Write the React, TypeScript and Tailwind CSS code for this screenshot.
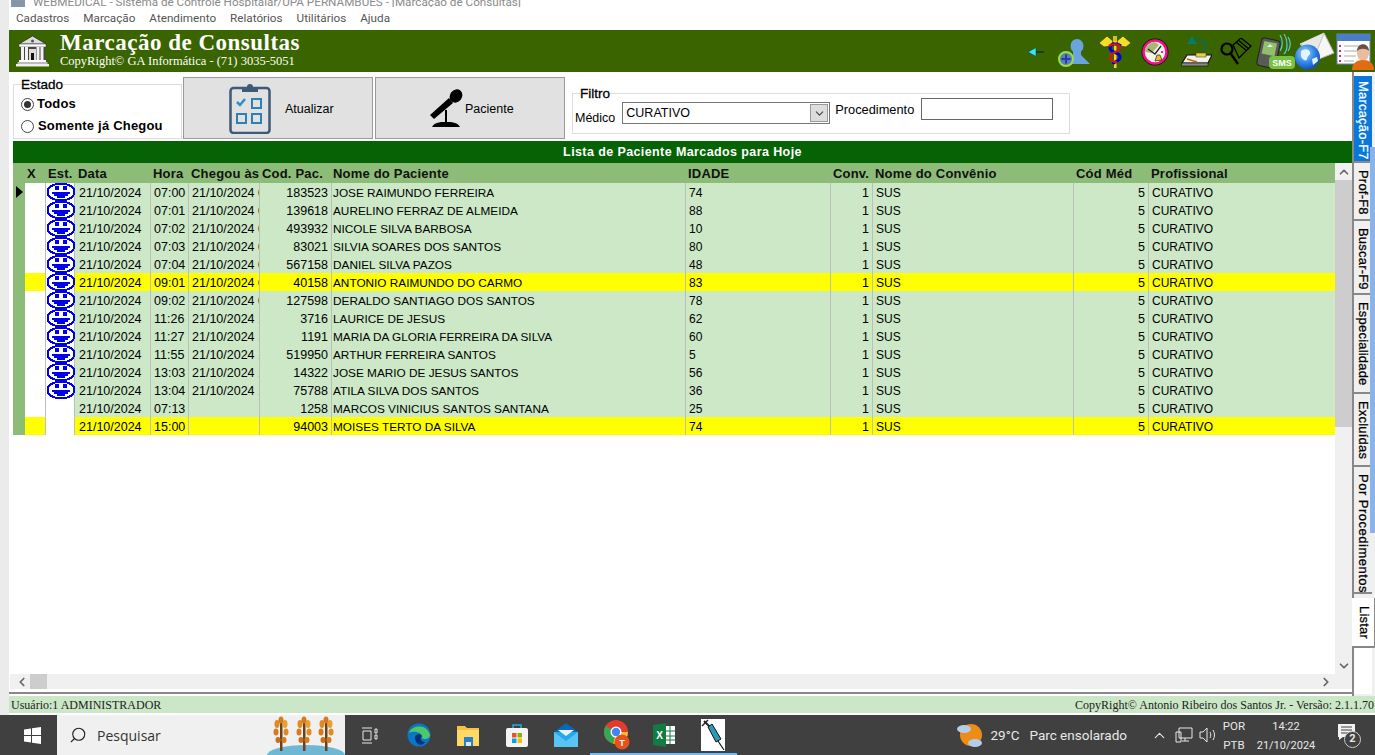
import { ChevronDown, ChevronLeft, ChevronRight, ChevronUp, Search } from "lucide-react";

const rows = [
  ["07:00", "21/10/2024 06:41", "183523", "JOSE RAIMUNDO FERREIRA", "74"],
  ["07:01", "21/10/2024 06:44", "139618", "AURELINO FERRAZ DE ALMEIDA", "88"],
  ["07:02", "21/10/2024 06:47", "493932", "NICOLE SILVA BARBOSA", "10"],
  ["07:03", "21/10/2024 06:52", "83021", "SILVIA SOARES DOS SANTOS", "80"],
  ["07:04", "21/10/2024 06:58", "567158", "DANIEL SILVA PAZOS", "48"],
  ["09:01", "21/10/2024 08:30", "40158", "ANTONIO RAIMUNDO DO CARMO", "83"],
  ["09:02", "21/10/2024 08:34", "127598", "DERALDO SANTIAGO DOS SANTOS", "78"],
  ["11:26", "21/10/2024 10:12", "3716", "LAURICE DE JESUS", "62"],
  ["11:27", "21/10/2024 10:15", "1191", "MARIA DA GLORIA FERREIRA DA SILVA", "60"],
  ["11:55", "21/10/2024 10:40", "519950", "ARTHUR FERREIRA SANTOS", "5"],
  ["13:03", "21/10/2024 12:20", "14322", "JOSE MARIO DE JESUS SANTOS", "56"],
  ["13:04", "21/10/2024 12:31", "75788", "ATILA SILVA DOS SANTOS", "36"],
  ["07:13", "", "1258", "MARCOS VINICIUS SANTOS SANTANA", "25"],
  ["15:00", "", "94003", "MOISES TERTO DA SILVA", "74"],
];

const cols = "grid grid-cols-[12px_20px_30px_76px_38px_71px_72px_354px_145px_42px_201px_75px_186px]";
const menu = ["Cadastros", "Marcação", "Atendimento", "Relatórios", "Utilitários", "Ajuda"];
const tabs = [
  ["Prof-F8", "h-[58px] tracking-[0.2px]"],
  ["Buscar-F9", "h-[74px] tracking-[0.2px]"],
  ["Especialidade", "h-[99px] tracking-[0.2px]"],
  ["Excluídas", "h-[73px] tracking-[0.2px]"],
  ["Por Procedimentos", "h-[127px] tracking-[0.5px]"],
];

function Smiley() {
  return (
    <svg width="30" height="20" viewBox="0 0 30 20" className="-mt-[1px] block" shapeRendering="crispEdges">
      <ellipse cx="15" cy="10" rx="13.500" ry="8.500" fill="#fff" stroke="#0000f0" strokeWidth="2" />
      <rect x="9" y="4" width="4" height="4" fill="#0000f0" />
      <rect x="17" y="4" width="4" height="4" fill="#0000f0" />
      <path d="M6 10h18v2h-2v2h-3v2h-8v-2H8v-2H6z" fill="#0000f0" />
    </svg>
  );
}

function Bank() {
  return (
    <svg width="33" height="32" viewBox="0 0 33 32">
      <path d="M16.500 1 30 9H3z" fill="#ddd" stroke="#222" strokeWidth="0.7" />
      <circle cx="16.500" cy="6" r="1.500" fill="#555" />
      <rect x="3" y="9" width="27" height="3" fill="#fff" stroke="#333" strokeWidth="0.5" />
      <rect x="4" y="12" width="25" height="13" fill="#444" />
      {[5, 9, 20.500, 24.500].map((x) => (
        <rect key={x} x={x} y="12" width="3" height="13" fill="#f2f2f2" />
      ))}
      <rect x="13" y="14" width="7" height="11" fill="#ddd" />
      <rect x="15" y="18" width="3" height="7" fill="#111" />
      <rect x="3" y="25" width="27" height="2" fill="#fff" />
      <rect x="1.500" y="27" width="30" height="2" fill="#bbb" />
      <rect x="0" y="29" width="33" height="2.500" fill="#eee" />
    </svg>
  );
}

function Clipboard() {
  return (
    <svg width="42" height="52" viewBox="0 0 42 52">
      <rect x="1.500" y="6" width="39" height="45" rx="3" fill="none" stroke="#3d5a78" strokeWidth="2.500" />
      <path d="M13 10V5h5a3 3 0 0 1 6 0h5v5z" fill="#3d5a78" />
      <path d="M8 20l3 3 5-6" fill="none" stroke="#2d8fc8" strokeWidth="2.500" />
      <rect x="23" y="17" width="9" height="9" fill="none" stroke="#2d7fb8" strokeWidth="2" />
      <rect x="8" y="32" width="9" height="9" fill="none" stroke="#2d7fb8" strokeWidth="2" />
      <rect x="23" y="32" width="9" height="9" fill="none" stroke="#2d7fb8" strokeWidth="2" />
    </svg>
  );
}

function Mic() {
  return (
    <svg width="34" height="40" viewBox="0 0 34 40">
      <path d="M1 27 20 10l4 5L5 31z" fill="#000" />
      <ellipse cx="27" cy="8" rx="6" ry="7" transform="rotate(38 27 8)" fill="#000" />
      <rect x="16" y="22" width="2" height="13" fill="#000" />
      <path d="M3 39c3-5 8-5 14-5s11 0 14 5z" fill="#000" />
    </svg>
  );
}

function HeaderIcons() {
  return (
    <div className="ml-auto flex h-full items-center">
      <svg width="17" height="10" viewBox="0 0 17 10" className="mr-[14px] mt-[2px]">
        <path d="M8 5h9" stroke="#10303a" strokeWidth="1.500" />
        <path d="M1 5l8-4.500v9z" fill="#30e8f8" stroke="#10303a" strokeWidth="0.500" />
      </svg>
      <svg width="33" height="28" viewBox="0 0 33 28" className="mr-[8px] mt-[3px]">
        <ellipse cx="19" cy="7" rx="6.500" ry="7" fill="#6aa4dc" />
        <path d="M15 12h8v4l9 9H12l3-5z" fill="#6aa4dc" />
        <circle cx="8" cy="20" r="7" fill="#4a86b8" stroke="#a0dc40" strokeWidth="2" />
        <path d="M8 15.500v9M3.500 20h9" stroke="#3a30a8" strokeWidth="2" />
      </svg>
      <svg width="32" height="33" viewBox="0 0 32 33" className="mr-[10px]">
        <path d="M14 6 8 1 0 8l5 4 7-1zM18 6l6-5 8 7-5 4-7-1z" fill="#f4e020" stroke="#333" strokeWidth="0.700" />
        <rect x="14" y="1" width="4" height="6" fill="#d8c010" />
        <rect x="15" y="6" width="2.500" height="27" fill="#f4d810" />
        <path d="M22 11c-4-3-11-3-11 2s10 4 10 9-6 4-7 7" fill="none" stroke="#0000d8" strokeWidth="3" />
        <path d="M10 11c4-3 11-2 11 2s-10 4-10 9 5 4 7 6" fill="none" stroke="#d81818" strokeWidth="2.200" />
      </svg>
      <svg width="28" height="28" viewBox="0 0 28 28" className="mr-[10px] mt-[2px]">
        <circle cx="14" cy="14" r="13.500" fill="#111" />
        <circle cx="14" cy="14" r="11.500" fill="#f4f4e8" stroke="#f01088" strokeWidth="2.500" />
        <path d="M4 14A10 10 0 0 1 14 4l4 3-7 8z" fill="#a8b878" />
        <path d="M7 11l7 5 6-8" stroke="#222" strokeWidth="1.300" fill="none" />
        <path d="M14 23l2-6h3l2 5z" fill="#e8c020" stroke="#222" strokeWidth="0.700" />
        <rect x="20" y="13" width="2" height="2" fill="#e020c0" />
      </svg>
      <svg width="33" height="33" viewBox="0 0 33 33" className="mr-[8px]">
        <path d="M8 20h25l-4 8H3z" fill="#f2f2e8" stroke="#111" strokeWidth="1.200" />
        <path d="M3 28h26v3H2z" fill="#888" stroke="#111" strokeWidth="0.600" />
        <path d="M8 24l10 3" stroke="#c06020" strokeWidth="1.500" />
        <rect x="17" y="18" width="10" height="4" fill="#e8d040" stroke="#333" strokeWidth="0.500" />
        <path d="M13 1l-5 8h10z" fill="#0a7a6a" />
        <path d="M15 3l12 5-3 9" fill="none" stroke="#0a6a5a" strokeWidth="1.600" />
      </svg>
      <svg width="32" height="28" viewBox="0 0 32 28" className="mr-[3px] mt-[2px]">
        <path d="M13 7 21 0l10 8-12 12zM16 4l11 9M18 2l11 9" fill="#3a6400" stroke="#000" strokeWidth="1.300" />
        <circle cx="7" cy="11" r="5.500" fill="#3a6400" stroke="#000" strokeWidth="2.200" />
        <path d="M11 16l7 10" stroke="#000" strokeWidth="2.500" />
      </svg>
      <svg width="40" height="36" viewBox="0 0 40 36" className="mt-[2px]">
        <path d="M25 1c3 4 3 12 0 16M29 0c4 6 4 16 0 20M33 3c3 4 3 10 0 14" fill="none" stroke="#58d0d0" strokeWidth="1.200" />
        <rect x="4" y="5" width="19" height="28" rx="3" transform="rotate(12 13 19)" fill="#5a5a5a" stroke="#222" />
        <rect x="8" y="8" width="13" height="13" transform="rotate(12 14 14)" fill="#90c068" />
        <path d="M12 13l3-3 3 3z" fill="#e8f0d8" />
        <rect x="14" y="22" width="26" height="13" rx="4" fill="#78c040" />
        <text x="27" y="32" textAnchor="middle" fill="#fff" fontSize="9" fontWeight="700" fontFamily="Liberation Sans, sans-serif">SMS</text>
      </svg>
      <svg width="40" height="38" viewBox="0 0 40 38" className="mr-[1px]">
        <defs>
          <radialGradient id="globe" cx="0.4" cy="0.35" r="0.7">
            <stop offset="0" stopColor="#a8d8f8" />
            <stop offset="0.55" stopColor="#3088e8" />
            <stop offset="1" stopColor="#1048b8" />
          </radialGradient>
        </defs>
        <path d="M5 12 29 1l10 20-20 8z" fill="#f6f6f6" stroke="#b8b8b8" />
        <path d="M5 12l17 7 7-18" fill="#e8e8e8" stroke="#c4c4c4" />
        <circle cx="12.500" cy="25" r="12.500" fill="url(#globe)" />
        <path d="M6 19c4-3 8-2 9 1s-3 4-3 7-5 1-6-3zM17 27l5-2 1 4-5 4z" fill="#e4f4fc" />
      </svg>
      <svg width="39" height="38" viewBox="0 0 39 38" className="mt-[1px]">
        <rect x="1" y="1" width="33" height="30" fill="#fff" stroke="#6688a8" />
        <rect x="1" y="1" width="33" height="7" fill="#4a7cc8" />
        <path d="M8 13h20M8 18h14M8 23h12M8 28h10" stroke="#aaa" />
        <rect x="3" y="12" width="2" height="2" fill="#e020a0" />
        <rect x="3" y="17" width="2" height="2" fill="#e020a0" />
        <rect x="3" y="22" width="2" height="2" fill="#e020a0" />
        <rect x="3" y="27" width="2" height="2" fill="#e020a0" />
        <ellipse cx="27" cy="20" rx="6" ry="8" fill="#e8bc9c" />
        <path d="M21 18c0-9 12-9 12 0-3-3-9-3-12 0z" fill="#6a5040" />
        <path d="M16 37c0-7 5-10 11-10s11 3 11 10z" fill="#e46c10" />
      </svg>
    </div>
  );
}

function Edge() {
  return (
    <svg width="24" height="24" viewBox="0 0 24 24">
      <circle cx="12" cy="12" r="11.500" fill="#0c75c4" />
      <path d="M2 10C4 2 20 0 23 12c0 4-6 5-8 3 2-5-8-8-13-5z" fill="#4cc864" />
      <path d="M8 15c0-4 5-5 7-2-3 2-1 6 3 6-4 6-10 1-10-4z" fill="#062f78" />
    </svg>
  );
}

function Folder() {
  return (
    <svg width="22" height="22" viewBox="0 0 22 22">
      <path d="M0 2h8l2 2h12v18H0z" fill="#f5c242" />
      <path d="M0 6h22v16H0z" fill="#ffd966" />
      <rect x="7" y="13" width="9" height="9" fill="#2a80c8" />
      <rect x="9" y="18" width="5" height="4" fill="#d8e8f4" />
    </svg>
  );
}

function Store() {
  return (
    <svg width="22" height="24" viewBox="0 0 22 24">
      <path d="M7 5V2h8v3" fill="none" stroke="#28a8e0" strokeWidth="1.500" />
      <rect x="0" y="5" width="22" height="19" rx="2" fill="#f4f4f4" />
      <rect x="6" y="10" width="4.500" height="4.500" fill="#f25022" />
      <rect x="11.500" y="10" width="4.500" height="4.500" fill="#7fba00" />
      <rect x="6" y="15.500" width="4.500" height="4.500" fill="#00a4ef" />
      <rect x="11.500" y="15.500" width="4.500" height="4.500" fill="#ffb900" />
    </svg>
  );
}

function Mail() {
  return (
    <svg width="24" height="24" viewBox="0 0 24 24">
      <path d="M12 0 24 9v15H0V9z" fill="#0a68b8" />
      <path d="M0 9h24v15H0z" fill="#28a8e8" />
      <path d="M0 9l12 9 12-9v15H0z" fill="#58c4f4" />
      <path d="M4 7h16l-8 6z" fill="#e8f4fc" />
    </svg>
  );
}

function Chrome() {
  return (
    <svg width="26" height="30" viewBox="0 0 26 30" className="ml-[4px]">
      <circle cx="12" cy="12" r="12" fill="#e33b2e" />
      <path d="M12 12 24 12A12 12 0 0 1 9 23.600z" fill="#fbc02d" />
      <path d="M12 12 9 23.600A12 12 0 0 1 1.600 6z" fill="#34a853" />
      <circle cx="12" cy="12" r="5.500" fill="#fff" />
      <circle cx="12" cy="12" r="4.200" fill="#4285f4" />
      <circle cx="18" cy="22" r="7.500" fill="#e8501c" />
      <text x="18" y="25.500" textAnchor="middle" fill="#fff" fontSize="9" fontWeight="700" fontFamily="Liberation Sans, sans-serif">T</text>
    </svg>
  );
}

function Excel() {
  return (
    <svg width="22" height="24" viewBox="0 0 22 24">
      <rect x="7" y="3" width="15" height="18" fill="#fff" />
      <path d="M12 3v18M17 3v18M7 8h15M7 13h15M7 17h15" stroke="#1d7a46" />
      <path d="M0 2 13 0v24L0 22z" fill="#107c41" />
      <text x="6.500" y="16" textAnchor="middle" fill="#fff" fontSize="10" fontWeight="700" fontFamily="Liberation Sans, sans-serif">X</text>
    </svg>
  );
}

function Syringe() {
  return (
    <svg width="24" height="32" viewBox="0 0 24 32">
      <rect width="24" height="32" fill="#fff" />
      <path d="M3 2 9 8" stroke="#222" strokeWidth="2" />
      <path d="M1 7l6-6" stroke="#222" strokeWidth="1.500" />
      <path d="M7 8l4-3 9 15-5 3z" fill="#2a9ab8" stroke="#111" />
      <path d="M17 22l6 9" stroke="#111" strokeWidth="1.200" />
    </svg>
  );
}

function Trees() {
  return (
    <svg width="78" height="40" viewBox="0 0 78 40">
      <ellipse cx="39" cy="40" rx="39" ry="10" fill="#6fb8d4" />
      {[14, 37, 59].map((x) => (
        <g key={x}>
          <rect x={x - 1} y="8" width="2.500" height="28" fill="#6a4020" />
          <ellipse cx={x - 4} cy="9" rx="2.500" ry="4" fill="#e08a24" />
          <ellipse cx={x + 4} cy="9" rx="2.500" ry="4" fill="#e8a030" />
          <ellipse cx={x} cy="5" rx="2.500" ry="3.500" fill="#d87a18" />
          <ellipse cx={x - 5} cy="17" rx="2.500" ry="3.500" fill="#d87a18" />
          <ellipse cx={x + 5} cy="17" rx="2.500" ry="3.500" fill="#e08a24" />
          <ellipse cx={x - 3} cy="25" rx="2.500" ry="3" fill="#c87018" />
          <ellipse cx={x + 3} cy="25" rx="2.500" ry="3" fill="#d87a18" />
        </g>
      ))}
    </svg>
  );
}

function TaskIcon({ active, children }: { active?: boolean; children: React.ReactNode }) {
  return (
    <div className={`flex h-full w-[49px] items-center justify-center border-b-2 pt-[2px] ${active ? "border-[#76b9ed]" : "border-transparent"}`}>
      {children}
    </div>
  );
}

export default function App() {
  return (
    <div className="flex h-[755px] w-[1375px] flex-col overflow-hidden bg-white font-['Liberation_Sans',sans-serif] text-[12.500px] text-black">
      <div className="flex h-[715px]">
        <div className="w-[9px] shrink-0 bg-[#ebebeb]" />
        <div className="flex w-[1366px] flex-col">
          <div className="h-[7px] overflow-hidden">
            <div className="-mt-[6px] flex items-center font-['Roboto',sans-serif] text-[11.700px] text-[#8a8a8a]">
              <div className="ml-[2px] h-[13px] w-[14px] bg-[#8496a8]" />
              <span className="ml-[8px]">WEBMEDICAL - Sistema de Controle Hospitalar/UPA PERNAMBUES - [Marcação de Consultas]</span>
            </div>
          </div>
          <div className="flex h-[23px] items-center gap-[14px] pl-[7px] font-['Roboto',sans-serif] text-[11.700px] text-[#555]">
            {menu.map((m) => (
              <span key={m}>{m}</span>
            ))}
          </div>
          <div className="flex h-[42px] items-center bg-[#3a6400] pl-[7px]">
            <Bank />
            <div className="ml-[11px] -mt-[2px] font-['Liberation_Serif',serif] text-white">
              <div className="text-[23px] font-bold leading-[22px] tracking-[0.5px]">Marcação de Consultas</div>
              <div className="text-[12.500px] leading-[14px]">CopyRight© GA Informática - (71) 3035-5051</div>
            </div>
            <HeaderIcons />
          </div>

          <div className="relative flex min-h-0 flex-1">
            <div className="flex w-[1343px] flex-col">
              <div className="flex h-[69px] pl-[4px] pt-[5px]">
                <fieldset className="mt-px h-[61px] w-[169px] border border-[#ddd] px-[7px]">
                  <legend className="text-[13.500px] leading-[13px] [-webkit-text-stroke:0.3px_black]">Estado</legend>
                  <label className="mt-[3px] flex h-[20px] items-center gap-[3px] text-[13px] font-bold tracking-[0.2px]">
                    <span className="flex h-[13px] w-[13px] items-center justify-center rounded-full border border-[#444]">
                      <span className="h-[7px] w-[7px] rounded-full bg-[#333]" />
                    </span>
                    Todos
                  </label>
                  <label className="mt-[2px] flex h-[20px] items-center gap-[4px] text-[13px] font-bold tracking-[0.2px]">
                    <span className="h-[13px] w-[13px] rounded-full border border-[#444]" />
                    Somente já Chegou
                  </label>
                </fieldset>
                <button className="ml-px flex h-[62px] w-[190px] items-center border border-[#9a9a9a] bg-[#e1e1e1] pl-[45px] text-[12.500px]">
                  <Clipboard />
                  <span className="ml-[14px] pt-[3px]">Atualizar</span>
                </button>
                <button className="ml-[2px] flex h-[62px] w-[190px] items-center border border-[#9a9a9a] bg-[#e1e1e1] pl-[53px] text-[12.500px]">
                  <Mic />
                  <span className="ml-[2px] pt-[3px]">Paciente</span>
                </button>
                <fieldset className="ml-[7px] mt-[10px] h-[47px] w-[498px] border border-[#ddd] px-[2px]">
                  <legend className="ml-[5px] text-[13.500px] leading-[13px] [-webkit-text-stroke:0.3px_black]">Filtro</legend>
                  <div className="flex items-start pt-[1px]">
                    <span className="mt-[8px] text-[12.500px]">Médico</span>
                    <div className="ml-[7px] mt-px flex h-[22px] w-[208px] items-center justify-between border border-[#777] pl-[3px] text-[12.500px]">
                      CURATIVO
                      <span className="mr-px flex h-[18px] w-[18px] items-center justify-center border border-[#999] bg-[#ddd]">
                        <ChevronDown size={13} color="#444" />
                      </span>
                    </div>
                    <span className="ml-[5px] -mt-px text-[12.800px]">Procedimento</span>
                    <div className="ml-[7px] -mt-[3px] h-[22px] w-[132px] border border-[#666]" />
                  </div>
                </fieldset>
              </div>

              <div className="ml-[4px] flex h-[22px] items-center justify-center bg-[#056205] text-[12.500px] font-bold tracking-[0.4px] text-white">
                Lista de Paciente Marcados para Hoje
              </div>

              <div className="ml-[4px] flex min-h-0 flex-1">
                <div className="w-[1322px] overflow-hidden">
                  <div className={`${cols} h-[20px] items-center bg-[#8cbc78] pt-[1px] text-[13px] font-bold tracking-[0.2px] text-[#111]`}>
                    <span />
                    <span className="pl-[2px]">X</span>
                    <span className="pl-[3px]">Est.</span>
                    <span className="pl-[3px]">Data</span>
                    <span className="pl-[2px]">Hora</span>
                    <span className="whitespace-nowrap pl-[2px]">Chegou às</span>
                    <span className="whitespace-nowrap pl-[2px]">Cod. Pac.</span>
                    <span className="pl-[1px]">Nome do Paciente</span>
                    <span className="pl-[2px]">IDADE</span>
                    <span className="pl-[2px]">Conv.</span>
                    <span className="pl-[2px]">Nome do Convênio</span>
                    <span className="pl-[2px]">Cód Méd</span>
                    <span className="pl-[2px]">Profissional</span>
                  </div>
                  {rows.map((r, i) => {
                    const bg = i === 5 || i === 13 ? "bg-[#ffff00]" : "bg-[#cce8c6]";
                    const side = i === 5 || i === 13 ? "bg-[#ffff00]" : "bg-white";
                    const cell = `${bg} h-[18px] overflow-hidden whitespace-nowrap border-r border-[#bdbdbd] px-[3px] leading-[20px]`;
                    return (
                      <div key={r[2]} className={`${cols} h-[18px]`}>
                        <div className="flex h-[18px] items-center bg-[#8cbc78] pl-[3px]">
                          {i === 0 && <div className="h-0 w-0 border-y-[6px] border-l-[7px] border-y-transparent border-l-black" />}
                        </div>
                        <div className={side} />
                        <div className="h-[18px] border-x border-[#bdbdbd] bg-white">{i < 12 && <Smiley />}</div>
                        <div className={`${cell} pl-[4px]`}>21/10/2024</div>
                        <div className={cell}>{r[0]}</div>
                        <div className={cell}>{r[1]}</div>
                        <div className={`${cell} text-right`}>{r[2]}</div>
                        <div className={`${cell} pl-[1px] text-[11.800px]`}>{r[3]}</div>
                        <div className={`${cell} text-[12px]`}>{r[4]}</div>
                        <div className={`${cell} text-right`}>1</div>
                        <div className={`${cell} text-[12px]`}>SUS</div>
                        <div className={`${cell} text-right`}>5</div>
                        <div className={`${bg} h-[18px] px-[3px] text-[12px] leading-[20px]`}>CURATIVO</div>
                      </div>
                    );
                  })}
                </div>
                <div className="flex w-[17px] flex-col bg-[#f0f0f0]">
                  <div className="flex h-[17px] items-center justify-center">
                    <ChevronUp size={14} strokeWidth={3} color="#666" />
                  </div>
                  <div className="h-[247px] bg-[#cdcdcd]" />
                  <div className="flex flex-1 items-end justify-center pb-[1px]">
                    <ChevronDown size={14} strokeWidth={3} color="#666" />
                  </div>
                </div>
              </div>

              <div className="ml-[1px] flex h-[15px] shrink-0 items-center bg-[#f0f0f0] pl-[3px]">
                <div className="flex w-[17px] justify-center">
                  <ChevronLeft size={14} strokeWidth={3} color="#666" />
                </div>
                <div className="h-[15px] w-[17px] bg-[#cdcdcd]" />
                <div className="ml-auto flex w-[33px] justify-start">
                  <ChevronRight size={14} strokeWidth={3} color="#666" />
                </div>
              </div>
              <div className="mt-[3px] h-[2px] shrink-0 bg-[#888]" />
              <div className="h-[2px] shrink-0" />
            </div>

            <div className="flex w-[23px] flex-col whitespace-nowrap border-l-2 border-[#888] bg-[#f0f0f0] pb-[2px] pr-[3px] text-[13px] [-webkit-text-stroke:0.25px]">
              <div className="flex h-[4px] bg-white" />
              <div className="flex h-[87px] items-center justify-start border-b-2 border-[#888] bg-[#0a78d8] pl-[1px] pt-[5px] tracking-[0.2px] text-white [writing-mode:vertical-rl]">
                Marcação-F7
              </div>
              {tabs.map(([label, style]) => (
                <div key={label} className={`flex ${style} items-center justify-start border-b-2 border-[#888] bg-[#f0f0f0] pl-[1px] pt-[7px] [writing-mode:vertical-rl]`}>
                  {label}
                </div>
              ))}
              <div className="-ml-[2px] mt-[4px] flex h-[50px] w-[24px] items-center justify-start rounded-br-[3px] border-r-2 border-b-2 border-[#888] bg-white pl-[3px] pt-[8px] tracking-[0.2px] [writing-mode:vertical-rl]">
                Listar
              </div>
              <div className="-ml-[2px] flex-1 border-l-2 border-[#888] bg-white" />
            </div>
            <div className="absolute left-[1361px] top-[75px] h-[386px] w-[5px] bg-[#8ab4e8]" />
          </div>

          <div className="flex h-[17px] shrink-0 items-center justify-between bg-[#cbe7c7] pl-[2px] pr-[1px] font-['Liberation_Serif',serif] text-[12px] text-[#222]">
            <span>Usuário:1 ADMINISTRADOR</span>
            <span>CopyRight© Antonio Ribeiro dos Santos Jr. - Versão: 2.1.1.70</span>
          </div>
          <div className="h-[2px] shrink-0" />
        </div>
      </div>

      <div className="flex h-[40px] items-center bg-[#404040] font-['Roboto',sans-serif] text-[#e8e8e8]">
        <div className="flex h-full w-[57px] shrink-0 items-center justify-center pl-[8px]">
          <svg width="17" height="17" viewBox="0 0 17 17">
            <path d="M0 2.400 7 1.400V8H0zM8 1.300 17 0v8H8zM0 9h7v6.600L0 14.600zM8 9h9v8l-9-1.300z" fill="#fff" />
          </svg>
        </div>
        <div className="flex h-full w-[288px] shrink-0 items-center bg-[#f0f0f0] pl-[12px] font-['Open_Sans',sans-serif] text-[14px] text-[#333]">
          <Search size={18} strokeWidth={1.500} className="-scale-x-100" color="#222" />
          <span className="ml-[10px] flex-1">Pesquisar</span>
          <Trees />
        </div>
        <div className="flex h-full shrink-0">
          <TaskIcon>
            <svg width="17" height="17" viewBox="0 0 17 17" fill="none" stroke="#e8e8e8">
              <path d="M1 1h10M1 16h10M2 4h8v9H2zM14 2h2v4h-2zM14 8h2v4h-2z" />
            </svg>
          </TaskIcon>
          <TaskIcon><Edge /></TaskIcon>
          <TaskIcon><Folder /></TaskIcon>
          <TaskIcon><Store /></TaskIcon>
          <TaskIcon><Mail /></TaskIcon>
          <TaskIcon active><Chrome /></TaskIcon>
          <TaskIcon active><Excel /></TaskIcon>
          <TaskIcon active><Syringe /></TaskIcon>
        </div>
        <div className="ml-auto flex h-full items-center">
          <svg width="26" height="28" viewBox="0 0 26 28">
            <circle cx="14" cy="14" r="11" fill="#ee8c18" />
            <ellipse cx="7" cy="8" rx="7" ry="4" fill="#b4cce8" />
            <ellipse cx="18" cy="22" rx="7" ry="4" fill="#b4cce8" />
          </svg>
          <span className="ml-[7px] text-[13.500px]">29°C</span>
          <span className="ml-[10px] text-[13.500px]">Parc ensolarado</span>
          <ChevronUp size={17} strokeWidth={1.500} className="ml-[24px]" />
          <svg width="18" height="17" viewBox="0 0 18 17" fill="none" stroke="#e8e8e8" className="ml-[7px]">
            <path d="M4 1h13v10H4zM1 5h5v10H1zM10 11v3M7 14h7" />
          </svg>
          <svg width="18" height="16" viewBox="0 0 18 16" fill="none" stroke="#e8e8e8" className="ml-[6px]">
            <path d="M1 5h3l4-4v14l-4-4H1zM11 5c1 2 1 4 0 6M14 3c2 3 2 7 0 10" />
          </svg>
          <div className="ml-[4px] w-[26px] pt-[1px] text-center text-[11.500px] leading-[19px]">
            <div>POR</div>
            <div>PTB</div>
          </div>
          <div className="ml-[8px] w-[62px] pt-[1px] text-center text-[11px] leading-[19px]">
            <div>14:22</div>
            <div>21/10/2024</div>
          </div>
          <div className="relative ml-[21px] mr-[15px] h-[24px] w-[22px]">
            <svg width="17" height="17" viewBox="0 0 17 17" className="absolute left-0 top-[1px]">
              <path d="M0 0h17v13H5l-4 3v-3H0z" fill="#f2f2f2" />
              <path d="M3 3h11M3 6h11M3 9h11" stroke="#404040" />
            </svg>
            <span className="absolute left-[6px] top-[8px] flex h-[17px] w-[17px] items-center justify-center rounded-full border border-[#ccc] bg-[#404040] text-[11px] font-bold">2</span>
          </div>
        </div>
      </div>
    </div>
  );
}
